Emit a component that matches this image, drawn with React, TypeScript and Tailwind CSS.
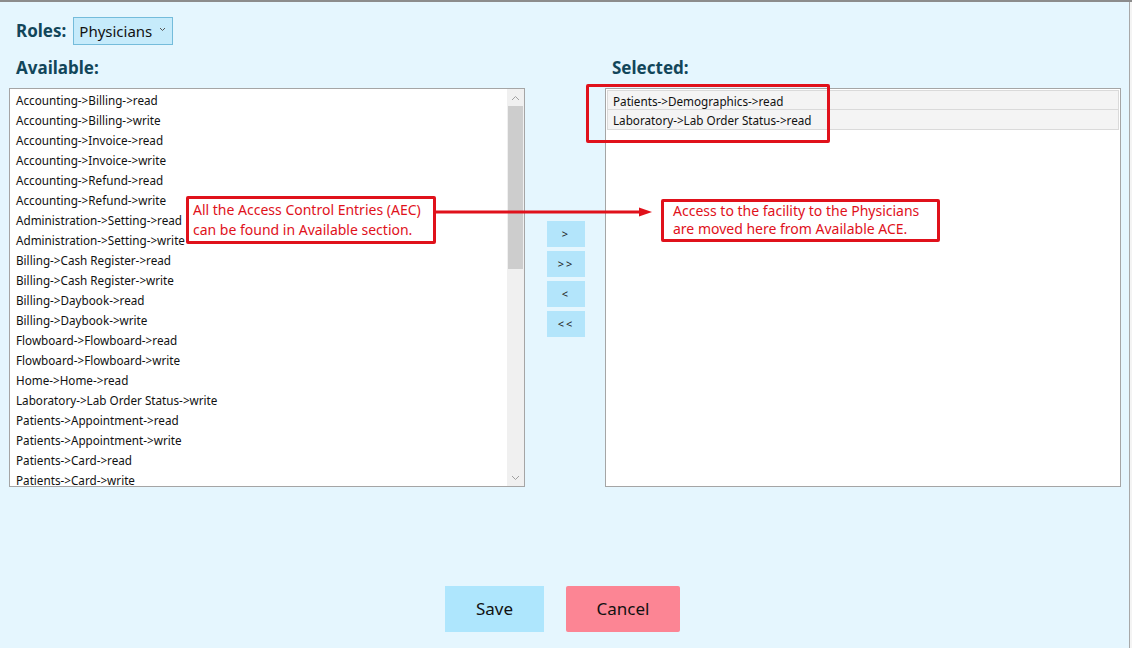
import { useState } from 'react';

const available = [
  'Accounting->Billing->read',
  'Accounting->Billing->write',
  'Accounting->Invoice->read',
  'Accounting->Invoice->write',
  'Accounting->Refund->read',
  'Accounting->Refund->write',
  'Administration->Setting->read',
  'Administration->Setting->write',
  'Billing->Cash Register->read',
  'Billing->Cash Register->write',
  'Billing->Daybook->read',
  'Billing->Daybook->write',
  'Flowboard->Flowboard->read',
  'Flowboard->Flowboard->write',
  'Home->Home->read',
  'Laboratory->Lab Order Status->write',
  'Patients->Appointment->read',
  'Patients->Appointment->write',
  'Patients->Card->read',
  'Patients->Card->write',
];

const selected = ['Patients->Demographics->read', 'Laboratory->Lab Order Status->read'];

function ChevronUp() {
  return (
    <svg width="9" height="6" viewBox="0 0 9 6" fill="none" stroke="#a0a0a0" strokeWidth="1">
      <path d="M1 5l3.5-3.5L8 5" />
    </svg>
  );
}

function ChevronDown() {
  return (
    <svg width="9" height="6" viewBox="0 0 9 6" fill="none" stroke="#a0a0a0" strokeWidth="1">
      <path d="M1 1l3.5 3.5L8 1" />
    </svg>
  );
}

export default function App() {
  const [role] = useState('Physicians');

  return (
    <div className="relative w-[1132px] h-[648px] overflow-hidden bg-[#e5f6fe] border-t-2 border-[#8c8c8c] font-['Noto_Sans',sans-serif] text-[#111]">
      <div className="absolute right-0 top-0 bottom-0 w-[3px] border-l border-[#a8a8a8] bg-[#f4f4f4]" />

      {/* Roles */}
      <div className="flex items-center h-[28px] mt-[15px] ml-[16px]">
        <span className="text-[17px] font-bold text-[#12465a] mr-[7px]">Roles:</span>
        <div className="flex items-center h-[28px] w-[100px] bg-[#c6ebfb] border border-[#74bcdb] pl-[5px]">
          <span className="text-[15px]">{role}</span>
          <svg className="ml-[7px] mb-[4px]" width="7" height="5" viewBox="0 0 7 5" fill="none" stroke="#555" strokeWidth="1">
            <path d="M1 1l2.5 2.5L6 1" />
          </svg>
        </div>
      </div>

      {/* Lists */}
      <div className="flex mt-[12px] ml-[9px]">
        <div className="w-[516px]">
          <div className="h-[31px] pl-[7px] text-[17px] font-bold text-[#12465a] leading-[22px]">Available:</div>
          <div className="flex h-[399px] bg-white border border-[#a5a5a5] overflow-hidden">
            <div className="flex-1 overflow-hidden pt-px">
              {available.map(item => (
                <div key={item} className="h-[20px] leading-[20px] pl-[6px] text-[11.7px] whitespace-nowrap">
                  {item}
                </div>
              ))}
            </div>
            <div className="w-[17px] flex flex-col bg-[#f0f0f0]">
              <div className="h-[17px] flex items-center justify-center">
                <ChevronUp />
              </div>
              <div className="h-[163px] mx-px bg-[#cdcdcd]" />
              <div className="flex-1" />
              <div className="h-[17px] flex items-center justify-center">
                <ChevronDown />
              </div>
            </div>
          </div>
        </div>

        <div className="w-[80px] flex flex-col items-center pt-[164px] gap-[4px] pl-[2px]">
          {['>', '>>', '<', '<<'].map(label => (
            <button
              key={label}
              className="w-[38px] h-[26px] bg-[#b3e5fb] text-[11px] tracking-[2px] text-[#222] flex items-center justify-center"
            >
              {label}
            </button>
          ))}
        </div>

        <div className="w-[516px]">
          <div className="h-[31px] pl-[7px] text-[17px] font-bold text-[#12465a] leading-[22px]">Selected:</div>
          <div className="h-[399px] bg-white border border-[#a5a5a5] p-px">
            {selected.map(item => (
              <div
                key={item}
                className="h-[20px] leading-[19px] pt-px pl-[5px] text-[11.7px] bg-[#f4f4f4] border border-[#dadada] border-t-0 first:border-t whitespace-nowrap"
              >
                {item}
              </div>
            ))}
          </div>
        </div>
      </div>

      {/* Footer buttons */}
      <div className="flex mt-[99px] ml-[445px] gap-[22px]">
        <button className="w-[99px] h-[46px] bg-[#aee6fd] text-[17px] text-[#111]">Save</button>
        <button className="w-[114px] h-[46px] bg-[#fc8594] rounded-[2px] text-[17px] text-[#111]">Cancel</button>
      </div>

      {/* Annotations */}
      <div className="absolute left-[586px] top-[82px] w-[244px] h-[59px] border-[3px] border-[#e0111b] rounded-[2px]" />

      <div className="absolute left-[186px] top-[194px] w-[250px] h-[48px] bg-white border-[3px] border-[#e0111b] rounded-[2px] pl-[4px] pt-[1px] text-[14px] leading-[20px] text-[#e0111b] whitespace-nowrap">
        <div>All the Access Control Entries (AEC)</div>
        <div>can be found in Available section.</div>
      </div>

      <svg className="absolute left-[435px] top-[203px]" width="220" height="14" viewBox="0 0 220 14">
        <line x1="0" y1="7" x2="207" y2="7" stroke="#e0111b" strokeWidth="3" />
        <path d="M204 2.5L217 7L204 11.5Z" fill="#e0111b" />
      </svg>

      <div className="absolute left-[661px] top-[197px] w-[279px] h-[43px] bg-white border-[3px] border-[#e0111b] rounded-[2px] pl-[9px] text-[14px] leading-[18px] text-[#e0111b] whitespace-nowrap">
        <div>Access to the facility to the Physicians</div>
        <div>are moved here from Available ACE.</div>
      </div>
    </div>
  );
}
